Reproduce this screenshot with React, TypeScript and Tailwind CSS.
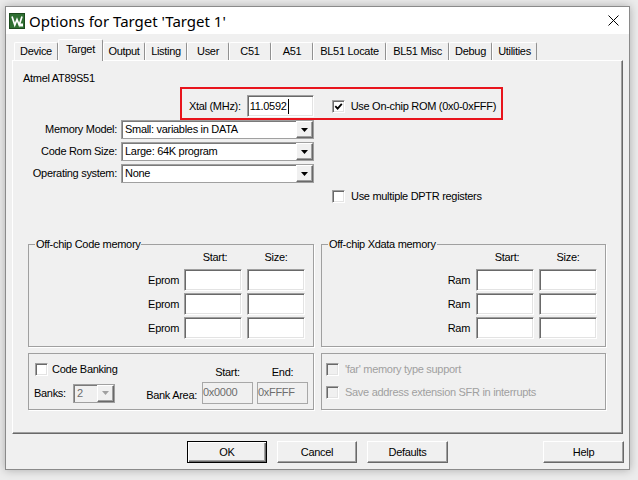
import type { ReactNode } from 'react'

// classic Win32 sunken edge (edit boxes, checkboxes)
const sunken =
  'border border-t-[#a0a0a0] border-l-[#a0a0a0] border-r-white border-b-white shadow-[inset_1px_1px_0_#696969,inset_-1px_-1px_0_#e3e3e3]'

function KeilIcon() {
  return (
    <svg width="16" height="16" viewBox="0 0 16 16" className="shrink-0">
      <rect x="0.5" y="0.5" width="15" height="15" fill="#2f6f32" stroke="#1c4a1e" />
      <path d="M3 3.5 L5.8 12 L8 6.5 L10.2 12 L13 3.5" stroke="#fff" strokeWidth="1.7" fill="none" />
      <rect x="11" y="10.5" width="3" height="3" fill="#fff" />
    </svg>
  )
}

function CheckBox({ checked = false, disabled = false }: { checked?: boolean; disabled?: boolean }) {
  return (
    <span
      className={`${sunken} w-[13px] h-[13px] shrink-0 flex items-center justify-center ${disabled ? 'bg-[#f0f0f0]' : 'bg-white'}`}
    >
      {checked && (
        <svg width="9" height="9" viewBox="0 0 9 9">
          <path d="M1.3 4.2 L3.6 6.6 L7.8 1.8" stroke="#000" strokeWidth="1.8" fill="none" />
        </svg>
      )}
    </span>
  )
}

function Arrow({ disabled = false }: { disabled?: boolean }) {
  return (
    <svg width="7" height="4" viewBox="0 0 7 4">
      <polygon points="0,0 7,0 3.5,4" fill={disabled ? '#a0a0a0' : '#000'} />
    </svg>
  )
}

function Combo({ className, value, disabled = false }: { className: string; value: string; disabled?: boolean }) {
  return (
    <div
      className={`flex border border-[#a0a0a0] shadow-[inset_1px_1px_0_#7a7a7a] ${disabled ? 'bg-[#f0f0f0] text-[#6d6d6d]' : 'bg-white'} ${className}`}
    >
      <span className="flex-1 pl-[3px] flex items-center whitespace-nowrap overflow-hidden">{value}</span>
      <span className="w-[17px] shrink-0 flex items-center justify-center bg-[#f0f0f0] border border-t-white border-l-white border-r-[#696969] border-b-[#696969] shadow-[inset_-1px_-1px_0_#a0a0a0]">
        <Arrow disabled={disabled} />
      </span>
    </div>
  )
}

function Field({ className, children }: { className: string; children?: ReactNode }) {
  return <div className={`${sunken} bg-white flex items-center ${className}`}>{children}</div>
}

function DisabledField({ className, value }: { className: string; value: string }) {
  return (
    <div className={`border border-[#a8a8a8] bg-[#f0f0f0] text-[#6d6d6d] flex items-center pb-[2px] ${className}`}>
      {value}
    </div>
  )
}

function Group({ title, className, children }: { title?: string; className: string; children?: ReactNode }) {
  return (
    <div className={`relative border border-[#a0a0a0] shadow-[1px_1px_0_#fff] ${className}`}>
      {title && <span className="absolute left-[6px] top-[-7px] bg-[#f0f0f0] px-px">{title}</span>}
      {children}
    </div>
  )
}

function Btn({ label, className, def = false }: { label: string; className: string; def?: boolean }) {
  return (
    <button
      className={`h-[22px] flex items-center justify-center bg-[#f0f0f0] ${
        def
          ? 'border border-black shadow-[inset_1px_1px_0_#fff,inset_-1px_-1px_0_#696969,inset_-2px_-2px_0_#a0a0a0]'
          : 'border border-t-white border-l-white border-r-[#696969] border-b-[#696969] shadow-[inset_-1px_-1px_0_#a0a0a0]'
      } ${className}`}
    >
      {label}
    </button>
  )
}

const tabs = [
  { label: 'Device', w: 'w-[44px]' },
  { label: 'Target', w: 'w-[45px]', active: true },
  { label: 'Output', w: 'w-[42px]' },
  { label: 'Listing', w: 'w-[42px]' },
  { label: 'User', w: 'w-[42px]' },
  { label: 'C51', w: 'w-[42px]' },
  { label: 'A51', w: 'w-[42px]' },
  { label: 'BL51 Locate', w: 'w-[73px]' },
  { label: 'BL51 Misc', w: 'w-[63px]' },
  { label: 'Debug', w: 'w-[43px]' },
  { label: 'Utilities', w: 'w-[45px]' },
]

const combos = [
  ['Memory Model:', 'Small: variables in DATA'],
  ['Code Rom Size:', 'Large: 64K program'],
  ['Operating system:', 'None'],
]

export default function App() {
  return (
    <div className="w-[638px] h-[480px] overflow-hidden bg-[#ececec] pl-[5px] pt-[6px] font-['Liberation_Sans',Arial,sans-serif] text-[11px] leading-[13px] tracking-[-0.3px] text-black">
      <div className="w-[625px] h-[464px] flex flex-col border border-[#8a8a8a] bg-[#f0f0f0] shadow-[0_0_9px_rgba(0,0,0,0.28)]">
        {/* title bar */}
        <div className="h-[27px] shrink-0 bg-white flex items-center pl-[3px] pr-[10px]">
          <KeilIcon />
          <span className="ml-[4px] font-['Noto_Sans',sans-serif] text-[15px] leading-[20px] tracking-normal">
            Options for Target 'Target 1'
          </span>
          <svg className="ml-auto" width="11" height="11" viewBox="0 0 11 11">
            <path d="M0.5 0.5 L10.5 10.5 M10.5 0.5 L0.5 10.5" stroke="#000" strokeWidth="1" />
          </svg>
        </div>

        {/* tab strip */}
        <div className="h-[26px] shrink-0 pt-[5px] pl-[8px] flex items-end">
          {tabs.map((t) =>
            t.active ? (
              <div
                key={t.label}
                className={`${t.w} h-[22px] -mb-px relative z-10 bg-[#f0f0f0] pb-[2px] flex items-center justify-center border-t border-l border-r border-t-white border-l-white border-r-[#919191] rounded-t-[2px]`}
              >
                {t.label}
              </div>
            ) : (
              <div
                key={t.label}
                className={`${t.w} h-[18px] flex items-center justify-center border-t border-l border-r border-t-white border-l-white border-r-[#919191] rounded-t-[2px]`}
              >
                {t.label}
              </div>
            )
          )}
        </div>

        {/* tab page */}
        <div className="ml-[6px] w-[611px] h-[374px] shrink-0 flex flex-col border border-t-white border-l-white border-r-[#696969] border-b-[#696969] shadow-[inset_-1px_-1px_0_#a0a0a0]">
          <div className="mt-[11px] ml-[10px] h-[13px]">Atmel AT89S51</div>

          <div className="mt-[2px] ml-[167px] w-[323px] h-[33px] border-2 border-[#e8141c] flex items-center pt-[5px] pl-[7px]">
            <span>Xtal (MHz):</span>
            <Field className="ml-[6px] w-[67px] h-[22px] pl-[2px]">
              11.0592
              <span className="ml-px w-px h-[15px] bg-black" />
            </Field>
            <span className="ml-[18px]">
              <CheckBox checked />
            </span>
            <span className="ml-[6px]">Use On-chip ROM (0x0-0xFFF)</span>
          </div>

          <div className="flex flex-col gap-[3px]">
            {combos.map(([label, value]) => (
              <div key={label} className="flex items-center h-[19px]">
                <span className="w-[104px] text-right">{label}</span>
                <Combo className="ml-[4px] w-[193px] h-[19px]" value={value} />
              </div>
            ))}
          </div>

          <div className="mt-[7px] ml-[319px] h-[13px] flex items-center">
            <CheckBox />
            <span className="ml-[6px]">Use multiple DPTR registers</span>
          </div>

          <div className="mt-[41px] ml-[15px] flex gap-[7px]">
            <Group title="Off-chip Code memory" className="w-[286px] h-[103px]">
              <div className="pt-[6px] flex h-[19px]">
                <span className="w-[155px]" />
                <span className="w-[58px] text-center pl-[4px]">Start:</span>
                <span className="ml-[5px] w-[58px] text-center">Size:</span>
              </div>
              <div className="mt-[5px] flex flex-col gap-[2px]">
                {[0, 1, 2].map((i) => (
                  <div key={i} className="flex items-center">
                    <span className="w-[150px] text-right">Eprom</span>
                    <Field className="ml-[5px] w-[58px] h-[22px]" />
                    <Field className="ml-[5px] w-[58px] h-[22px]" />
                  </div>
                ))}
              </div>
            </Group>
            <Group title="Off-chip Xdata memory" className="w-[285px] h-[103px]">
              <div className="pt-[6px] flex h-[19px]">
                <span className="w-[154px]" />
                <span className="w-[58px] text-center pl-[4px]">Start:</span>
                <span className="ml-[5px] w-[58px] text-center">Size:</span>
              </div>
              <div className="mt-[5px] flex flex-col gap-[2px]">
                {[0, 1, 2].map((i) => (
                  <div key={i} className="flex items-center">
                    <span className="w-[148px] text-right">Ram</span>
                    <Field className="ml-[6px] w-[58px] h-[22px]" />
                    <Field className="ml-[5px] w-[58px] h-[22px]" />
                  </div>
                ))}
              </div>
            </Group>
          </div>

          <div className="mt-[6px] ml-[15px] flex gap-[7px]">
            <Group className="w-[286px] h-[57px]">
              <div className="mt-[8px] h-[15px] flex items-center">
                <div className="w-[173px] flex items-center pl-[6px]">
                  <CheckBox />
                  <span className="ml-[4px]">Code Banking</span>
                </div>
                <span className="w-[51px] text-center mt-[5px]">Start:</span>
                <span className="ml-[4px] w-[51px] text-center mt-[5px]">End:</span>
              </div>
              <div className="mt-[5px] h-[22px] flex items-center">
                <span className="w-[44px] pl-[5px]">Banks:</span>
                <Combo className="w-[42px] h-[19px]" value="2" disabled />
                <span className="w-[82px] text-right mt-[4px]">Bank Area:</span>
                <DisabledField className="ml-[5px] w-[51px] h-[22px]" value="0x0000" />
                <DisabledField className="ml-[4px] w-[51px] h-[22px]" value="0xFFFF" />
              </div>
            </Group>
            <Group className="w-[285px] h-[57px]">
              <div className="mt-[9px] ml-[4px] h-[13px] flex items-center text-[#a0a0a0]">
                <CheckBox disabled />
                <span className="ml-[6px]">'far' memory type support</span>
              </div>
              <div className="mt-[10px] ml-[4px] h-[13px] flex items-center text-[#a0a0a0]">
                <CheckBox disabled />
                <span className="ml-[6px]">Save address extension SFR in interrupts</span>
              </div>
            </Group>
          </div>
        </div>

        {/* dialog buttons */}
        <div className="mt-[7px] h-[22px] shrink-0 flex pl-[181px] pr-[5px]">
          <Btn label="OK" className="w-[80px]" def />
          <Btn label="Cancel" className="ml-[10px] w-[80px]" />
          <Btn label="Defaults" className="ml-[10px] w-[81px]" />
          <Btn label="Help" className="ml-auto w-[81px]" />
        </div>
      </div>
    </div>
  )
}
